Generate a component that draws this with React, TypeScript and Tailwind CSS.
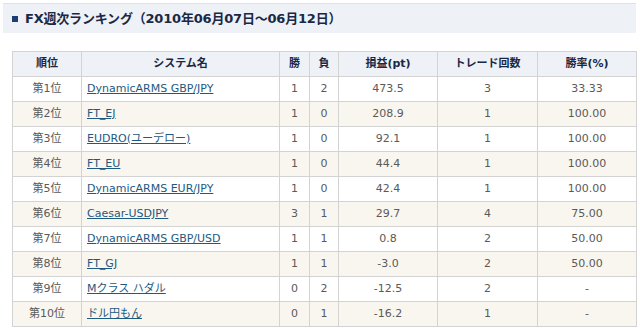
const rows = [
  { rank: "第1位", name: "DynamicARMS GBP/JPY", win: 1, lose: 2, pl: "473.5", trades: 3, rate: "33.33" },
  { rank: "第2位", name: "FT_EJ", win: 1, lose: 0, pl: "208.9", trades: 1, rate: "100.00" },
  { rank: "第3位", name: "EUDRO(ユーデロー)", win: 1, lose: 0, pl: "92.1", trades: 1, rate: "100.00" },
  { rank: "第4位", name: "FT_EU", win: 1, lose: 0, pl: "44.4", trades: 1, rate: "100.00" },
  { rank: "第5位", name: "DynamicARMS EUR/JPY", win: 1, lose: 0, pl: "42.4", trades: 1, rate: "100.00" },
  { rank: "第6位", name: "Caesar-USDJPY", win: 3, lose: 1, pl: "29.7", trades: 4, rate: "75.00" },
  { rank: "第7位", name: "DynamicARMS GBP/USD", win: 1, lose: 1, pl: "0.8", trades: 2, rate: "50.00" },
  { rank: "第8位", name: "FT_GJ", win: 1, lose: 1, pl: "-3.0", trades: 2, rate: "50.00" },
  { rank: "第9位", name: "Mクラス ハダル", win: 0, lose: 2, pl: "-12.5", trades: 2, rate: "-" },
  { rank: "第10位", name: "ドル円もん", win: 0, lose: 1, pl: "-16.2", trades: 1, rate: "-" },
];

const heads = ["順位", "システム名", "勝", "負", "損益(pt)", "トレード回数", "勝率(%)"];

export default function App() {
  return (
    <div className="w-[640px] h-[331px] overflow-hidden bg-white pl-[3px] pr-[4px] pt-[3px] font-['DejaVu_Sans','Noto_Sans_CJK_JP',sans-serif]">
      <div className="flex h-[30px] items-center gap-[7px] border-t border-[#dde2e8] bg-[#eef2f7] pl-[9px]">
        <span className="h-[6px] w-[6px] bg-[#1b3f73]" />
        <h2 className="text-[13px] font-bold tracking-[-0.2px] text-[#1a2846]">
          FX週次ランキング（2010年06月07日～06月12日）
        </h2>
      </div>
      <table className="ml-[9px] mt-[18px] w-[624px] table-fixed border-collapse text-[11px] text-[#5a5a5a]">
        <colgroup>
          <col className="w-[69px]" />
          <col className="w-[198px]" />
          <col className="w-[30px]" />
          <col className="w-[29px]" />
          <col className="w-[99px]" />
          <col className="w-[100px]" />
          <col className="w-[99px]" />
        </colgroup>
        <thead>
          <tr className="bg-[#eef2f7]">
            {heads.map((h) => (
              <th key={h} className="h-[25px] border border-[#d3d3d3] p-0 text-center text-[11px] font-bold text-[#1a2846]">
                {h}
              </th>
            ))}
          </tr>
        </thead>
        <tbody>
          {rows.map((r, i) => (
            <tr key={r.rank} className={i % 2 === 1 ? "bg-[#f9f6ef]" : "bg-white"}>
              <td className="h-[25px] border border-[#d3d3d3] p-0 text-center">{r.rank}</td>
              <td className="border border-[#d3d3d3] py-0 pl-[5px]">
                <a href="#" className="text-[#1c5a82] underline">{r.name}</a>
              </td>
              <td className="border border-[#d3d3d3] p-0 text-center">{r.win}</td>
              <td className="border border-[#d3d3d3] p-0 text-center">{r.lose}</td>
              <td className="border border-[#d3d3d3] p-0 text-center">{r.pl}</td>
              <td className="border border-[#d3d3d3] p-0 text-center">{r.trades}</td>
              <td className="border border-[#d3d3d3] p-0 text-center">{r.rate}</td>
            </tr>
          ))}
        </tbody>
      </table>
    </div>
  );
}
